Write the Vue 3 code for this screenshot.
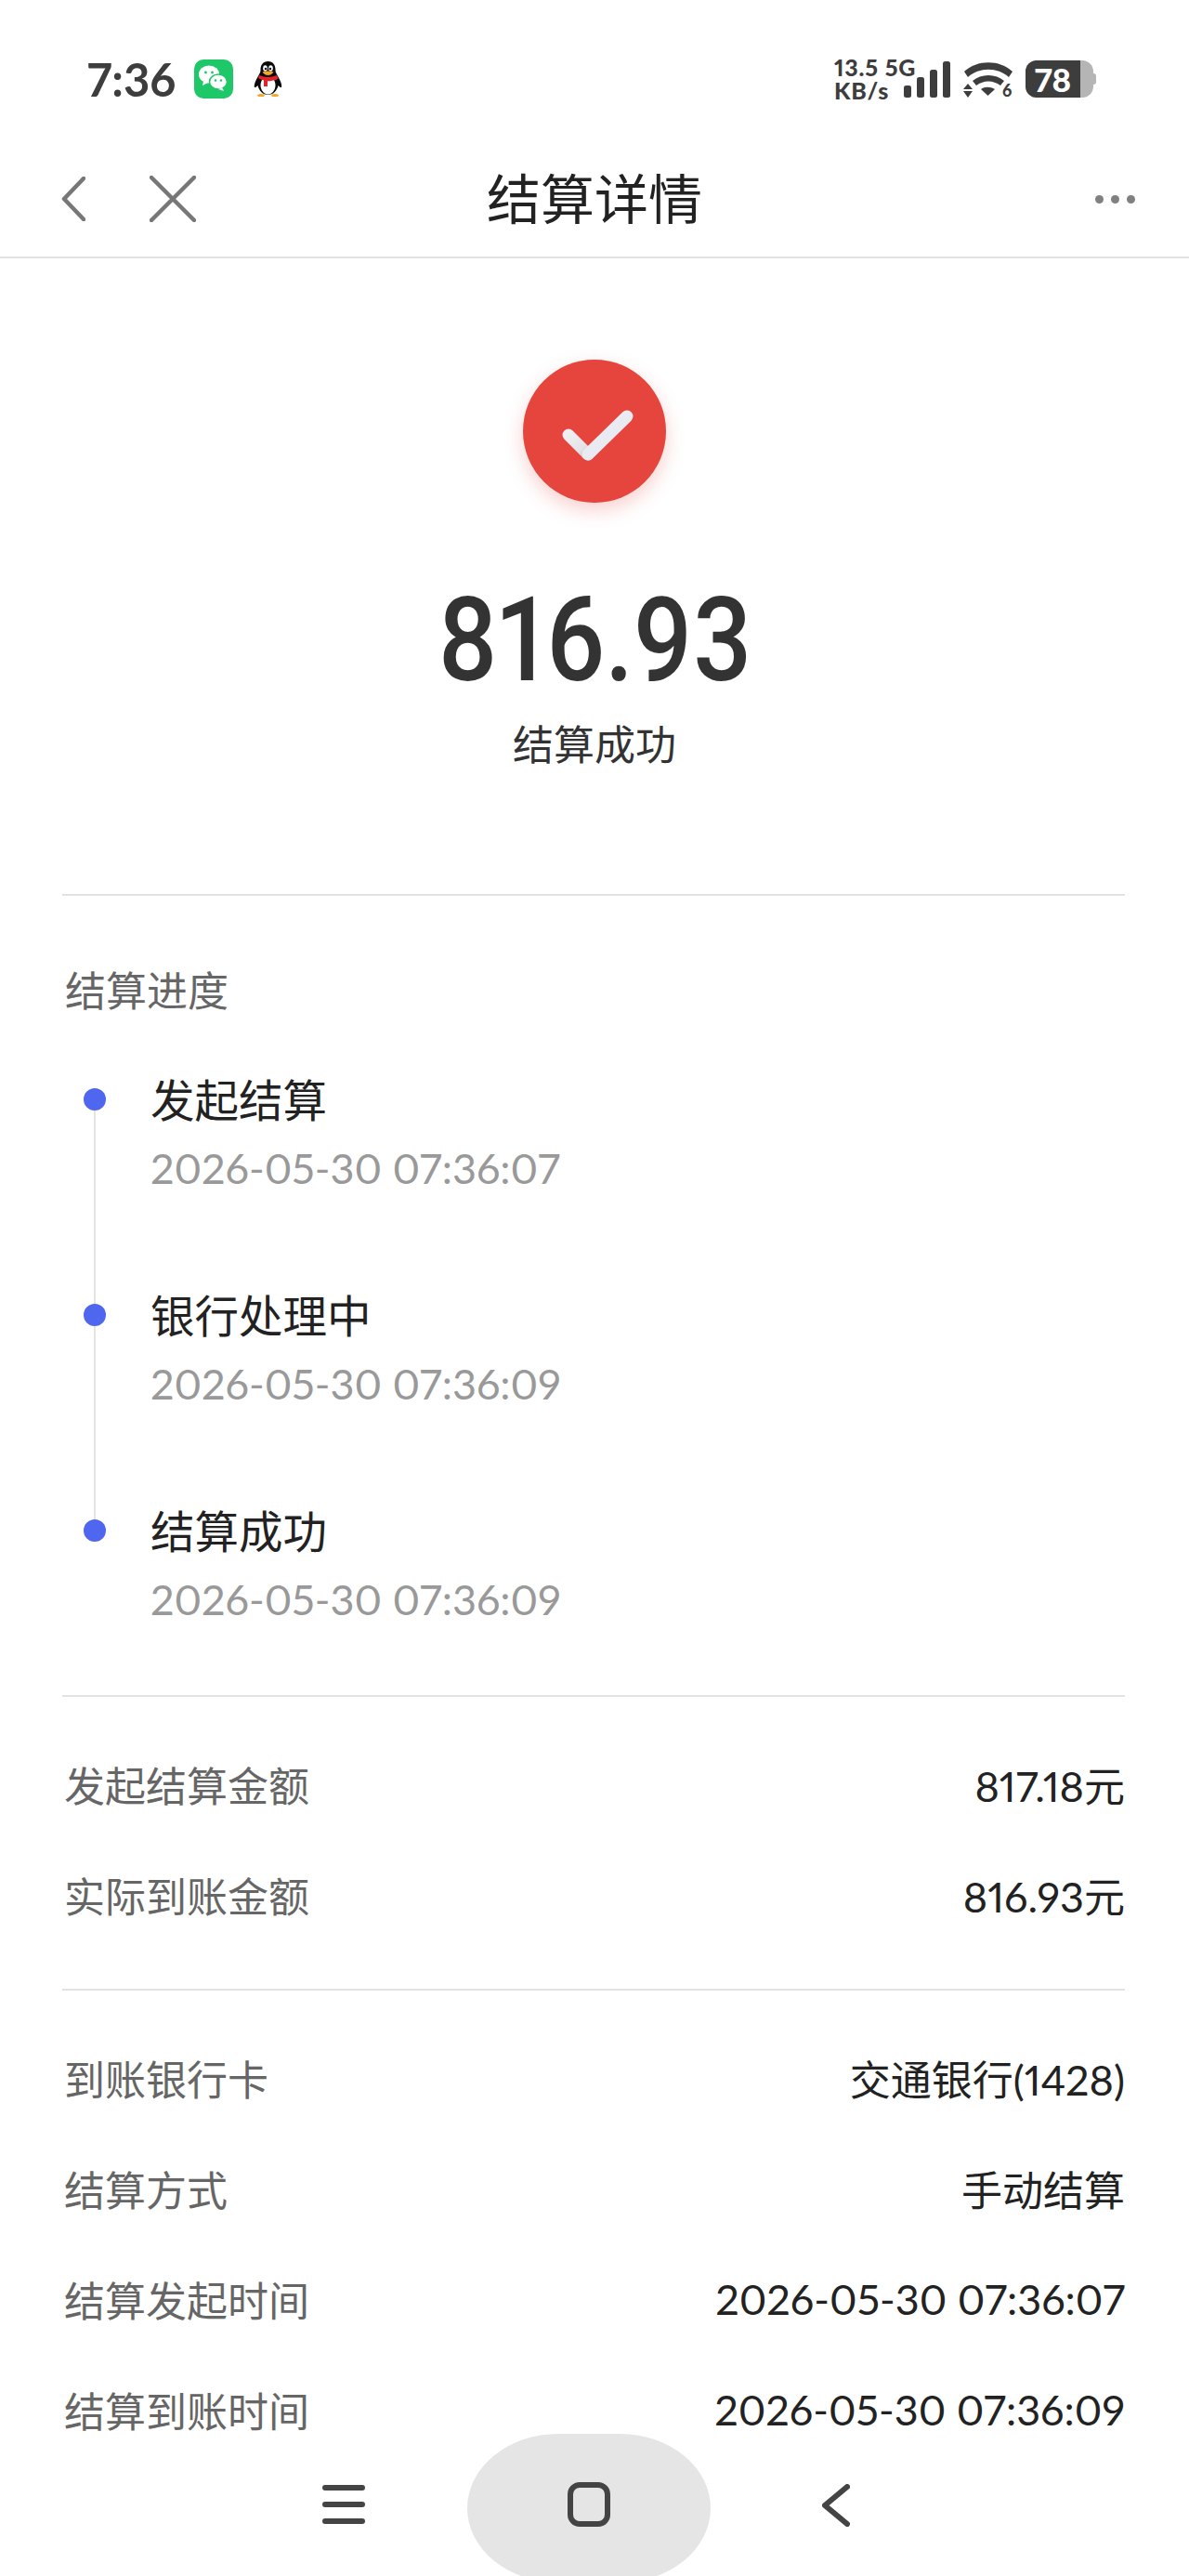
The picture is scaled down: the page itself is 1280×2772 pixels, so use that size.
<script setup>
const steps = [
  { title: '发起结算', time: '2026-05-30 07:36:07' },
  { title: '银行处理中', time: '2026-05-30 07:36:09' },
  { title: '结算成功', time: '2026-05-30 07:36:09' },
];

const amountRows = [
  { label: '发起结算金额', num: '817.18', post: '元' },
  { label: '实际到账金额', num: '816.93', post: '元' },
];

const infoRows = [
  { label: '到账银行卡', pre: '交通银行', num: '(1428)' },
  { label: '结算方式', pre: '手动结算' },
  { label: '结算发起时间', num: '2026-05-30 07:36:07' },
  { label: '结算到账时间', num: '2026-05-30 07:36:09' },
];
</script>

<template>
  <div class="page">
    <div class="status">
      <div class="status__left">
        <span class="status__time">7:36</span>
        <svg class="status__wechat" width="42" height="42" viewBox="0 0 42 42">
          <rect width="42" height="42" rx="10" fill="#1ec768" />
          <ellipse cx="16" cy="16" rx="11" ry="9.5" fill="#fff" />
          <path d="M10 23l-1 5 6-3z" fill="#fff" />
          <ellipse cx="26" cy="24" rx="9.500" ry="8" fill="#fff" stroke="#1ec768" stroke-width="1.500" />
          <path d="M30 30l2 4-6-2z" fill="#fff" />
          <circle cx="12.500" cy="14" r="1.400" fill="#1ec768" />
          <circle cx="19.500" cy="14" r="1.400" fill="#1ec768" />
          <circle cx="23" cy="22.500" r="1.200" fill="#1ec768" />
          <circle cx="29" cy="22.500" r="1.200" fill="#1ec768" />
        </svg>
        <svg class="status__qq" width="31" height="38" viewBox="0 0 31 38">
          <path d="M15.500 0C10 0 7.500 4 7.500 9c0 2-.5 3.500-1.500 5C3 19 0 25 1 28c1 .5 2.500-1 3.500-2 1.500 6 5.500 10 11 10s9.500-4 11-10c1 1 2.500 2.500 3.500 2 1-3-2-9-5-14-1-1.500-1.500-3-1.500-5 0-5-2.500-9-8-9z" fill="#0a0a0a" />
          <path d="M9 20c-1.500 3-2 6-1 9 1.500 4 4 6.500 7.500 6.500S21.500 33 23 29c1-3 .5-6-1-9z" fill="#fff" />
          <path d="M6 15c6 2.500 13 2.500 19 0l1.500 3.500c-2 1.500-5 2-7.500 2.500-1.500.3-3 .3-4 .2V27h-4v-6.500C9.500 20 7.500 19.500 5 18z" fill="#e3252b" />
          <ellipse cx="12.500" cy="7.500" rx="2.300" ry="3.200" fill="#fff" />
          <ellipse cx="18.500" cy="7.500" rx="2.300" ry="3.200" fill="#fff" />
          <circle cx="13" cy="8" r="1.200" fill="#000" />
          <circle cx="18" cy="8" r="1.200" fill="#000" />
          <path d="M9.500 11.500c3.500-1.500 8.500-1.500 12 0-1.500 2.500-4 3.500-6 3.500s-4.500-1-6-3.500z" fill="#f5a623" />
          <path d="M4 36c2.500-1.500 6-1.500 8 0l-1 2H5zM27 36c-2.500-1.500-6-1.500-8 0l1 2h6z" fill="#f5a623" />
        </svg>
      </div>
      <div class="status__right">
        <div class="status__speed">
          <span>13.5 5G</span>
          <span>KB/s</span>
        </div>
        <svg class="status__signal" width="50" height="40" viewBox="0 0 50 40">
          <rect x="0" y="27" width="8" height="13" rx="2.500" fill="#3d3d3d" />
          <rect x="14" y="18" width="8" height="22" rx="2.500" fill="#3d3d3d" />
          <rect x="28" y="10" width="8" height="30" rx="2.500" fill="#3d3d3d" />
          <rect x="42" y="1" width="8" height="39" rx="2.500" fill="#3d3d3d" />
        </svg>
        <svg class="status__wifi" width="54" height="46" viewBox="0 0 54 46">
          <path d="M1 12C15 -1 39 -1 53 12l-4 6C37 7 17 7 5 18z" fill="#3d3d3d" />
          <path d="M10 22c9-8 25-8 34 0l-4 5c-8-6-18-6-26 0z" fill="#3d3d3d" />
          <path d="M19 31c4-3 10-3 15 0l-7.500 7z" fill="#3d3d3d" />
          <path d="M5 25l5 6H0zM5 40l-5-7h10z" fill="#3d3d3d" />
          <text x="42" y="39" class="status__wifi-six">6</text>
        </svg>
        <div class="battery">
          <div class="battery__fill">78</div>
          <div class="battery__nub"></div>
        </div>
      </div>
    </div>

    <div class="nav">
      <div class="nav__left">
        <svg width="26" height="48" viewBox="0 0 26 48">
          <path d="M24 2L3 24l21 22" fill="none" stroke="#777" stroke-width="4.500" stroke-linecap="round" stroke-linejoin="round" />
        </svg>
        <svg width="50" height="50" viewBox="0 0 50 50">
          <path d="M2 2l46 46M48 2L2 48" fill="none" stroke="#777" stroke-width="4.500" stroke-linecap="round" />
        </svg>
      </div>
      <div class="nav__title">结算详情</div>
      <div class="nav__more">
        <span></span><span></span><span></span>
      </div>
    </div>

    <div class="result">
      <div class="result__icon">
        <svg width="154" height="154" viewBox="0 0 154 154">
          <defs>
            <linearGradient id="tick" gradientUnits="userSpaceOnUse" x1="48" y1="80" x2="70" y2="103">
              <stop offset="0" stop-color="#f0f0f3" />
              <stop offset="0.7" stop-color="#e4e2e6" />
              <stop offset="1" stop-color="#c9bfc2" />
            </linearGradient>
          </defs>
          <path d="M49 81l21 21" fill="none" stroke="url(#tick)" stroke-width="13" stroke-linecap="round" />
          <path d="M70 102l42-41" fill="none" stroke="#eaebf2" stroke-width="13" stroke-linecap="round" />
        </svg>
      </div>
      <div class="result__amount">816.93</div>
      <div class="result__text">结算成功</div>
    </div>

    <div class="section progress">
      <div class="progress__title">结算进度</div>
      <div class="timeline">
        <div v-for="(step, index) in steps" :key="index" class="timeline__item">
          <div class="timeline__dot"></div>
          <div class="timeline__name">{{ step.title }}</div>
          <div class="timeline__time">{{ step.time }}</div>
        </div>
      </div>
    </div>

    <div class="section rows rows--amount">
      <div v-for="row in amountRows" :key="row.label" class="row">
        <span class="row__label">{{ row.label }}</span>
        <span class="row__value">{{ row.num }}<span class="row__cjk">{{ row.post }}</span></span>
      </div>
    </div>

    <div class="section rows">
      <div v-for="row in infoRows" :key="row.label" class="row">
        <span class="row__label">{{ row.label }}</span>
        <span class="row__value"><span class="row__cjk">{{ row.pre }}</span>{{ row.num }}</span>
      </div>
    </div>

    <div class="sysbar">
      <svg width="46" height="44" viewBox="0 0 46 44">
        <path d="M3 4h40M3 22h40M3 40h40" fill="none" stroke="#444" stroke-width="6" stroke-linecap="round" />
      </svg>
      <div class="sysbar__home">
        <svg width="46" height="48" viewBox="0 0 46 48">
          <rect x="3" y="3" width="40" height="42" rx="10" fill="none" stroke="#444" stroke-width="6" />
        </svg>
      </div>
      <svg width="30" height="46" viewBox="0 0 30 46">
        <path d="M27 3L3 23l24 20" fill="none" stroke="#444" stroke-width="6" stroke-linecap="round" stroke-linejoin="round" />
      </svg>
    </div>
  </div>
</template>

<style>
html,
body {
  margin: 0;
  background: #fff;
}
</style>

<style scoped>
.page {
  position: relative;
  width: 1280px;
  height: 2772px;
  overflow: hidden;
  background: #fff;
  font-family: Lato, "Noto Sans CJK SC", sans-serif;
  font-variant-numeric: proportional-nums;
  color: #222;
}

.status {
  display: flex;
  justify-content: space-between;
  align-items: center;
  height: 170px;
  padding: 0 103px 0 94px;
  box-sizing: border-box;
  color: #3d3d3d;
}

.status__left {
  display: flex;
  align-items: center;
}

.status__time {
  width: 96px;
  font-size: 49px;
  font-weight: 700;
  line-height: 1;
}

.status__wechat {
  margin-left: 19px;
}

.status__qq {
  margin-left: 22px;
}

.status__right {
  display: flex;
  align-items: center;
}

.status__speed {
  display: flex;
  flex-direction: column;
  width: 75px;
  font-size: 25px;
  font-weight: 900;
  line-height: 25px;
  letter-spacing: 0.8px;
  white-space: nowrap;
}

.status__wifi {
  margin: 0 0 -6px 14px;
}

.status__wifi-six {
  font-family: Lato, sans-serif;
  font-size: 18px;
  font-weight: 900;
  fill: #3d3d3d;
}

.battery {
  display: flex;
  align-items: center;
  width: 73px;
  height: 40px;
  margin-left: 13px;
  background: #b5b5b5;
  border-radius: 12px;
  position: relative;
}

.battery__fill {
  width: 59px;
  height: 40px;
  line-height: 40px;
  text-align: center;
  color: #fff;
  font-size: 35px;
  font-weight: 900;
  background: #3d3d3d;
  border-radius: 12px 0 0 12px;
}

.battery__nub {
  position: absolute;
  right: -3px;
  top: 14px;
  width: 3px;
  height: 12px;
  background: #b5b5b5;
  border-radius: 0 3px 3px 0;
}

.nav {
  display: flex;
  align-items: center;
  justify-content: space-between;
  position: relative;
  height: 108px;
  padding: 0 58px 18px 66px;
  box-sizing: border-box;
  border-bottom: 2px solid #e2e2e2;
}

.nav__left {
  display: flex;
  align-items: center;
  gap: 69px;
}

.nav__title {
  position: absolute;
  left: 0;
  right: 0;
  text-align: center;
  font-size: 58px;
  line-height: 1;
  color: #222;
}

.nav__more {
  display: flex;
  gap: 8px;
}

.nav__more span {
  width: 9px;
  height: 9px;
  border-radius: 50%;
  background: #808080;
}

.result {
  display: flex;
  flex-direction: column;
  align-items: center;
  height: 684px;
  box-sizing: border-box;
  padding-top: 109px;
}

.result__icon {
  width: 154px;
  height: 154px;
  border-radius: 50%;
  background: #e5453d;
  box-shadow: 0 8px 20px rgba(229, 69, 61, 0.25);
}

.result__icon svg {
  display: block;
}

.result__amount {
  margin-top: 73px;
  font-family: Roboto, sans-serif;
  font-size: 126px;
  line-height: 150px;
  font-weight: 500;
  color: #333;
  transform: scaleX(0.88);
}

.result__text {
  margin-top: 7px;
  font-size: 44px;
  line-height: 60px;
  color: #333;
}

.section {
  margin: 0 69px 0 67px;
  border-top: 2px solid #e2e2e2;
}

.progress {
  height: 862px;
  box-sizing: border-box;
}

.progress__title {
  padding: 72px 0 0 3px;
  font-size: 44px;
  line-height: 60px;
  color: #666;
}

.timeline {
  margin-top: 58px;
}

.timeline__item {
  position: relative;
  height: 232px;
  padding-left: 95px;
  box-sizing: border-box;
}

.timeline__item:not(:last-child)::before {
  content: '';
  position: absolute;
  left: 34px;
  top: 30px;
  width: 2px;
  height: 232px;
  background: #e4e4e4;
}

.timeline__dot {
  position: absolute;
  left: 23px;
  top: 17px;
  width: 24px;
  height: 24px;
  border-radius: 50%;
  background: #4f66ee;
}

.timeline__name {
  font-size: 47.5px;
  line-height: 60px;
  color: #222;
}

.timeline__time {
  margin-top: 13px;
  font-size: 45px;
  line-height: 60px;
  color: #999;
}

.rows {
  padding-top: 34px;
}

.rows--amount {
  padding-bottom: 42px;
}

.row {
  display: flex;
  justify-content: space-between;
  align-items: center;
  height: 119px;
  padding-left: 2px;
  font-size: 44px;
}

.row__label {
  color: #666;
}

.row__value {
  color: #222;
  font-size: 45px;
}

.row__cjk {
  font-size: 44px;
}

.sysbar {
  position: absolute;
  left: 0;
  right: 0;
  bottom: 0;
  height: 153px;
  padding-right: 18px;
  display: flex;
  align-items: flex-start;
  justify-content: center;
}

.sysbar > svg:first-child {
  margin: 54px 110px 0 0;
}

.sysbar > svg:last-child {
  margin: 54px 0 0 120px;
}

.sysbar__home {
  display: flex;
  align-items: center;
  justify-content: center;
  width: 262px;
  height: 160px;
  background: #e5e5e5;
  border-radius: 98px / 80px;
  padding-bottom: 8px;
  box-sizing: border-box;
}
</style>
